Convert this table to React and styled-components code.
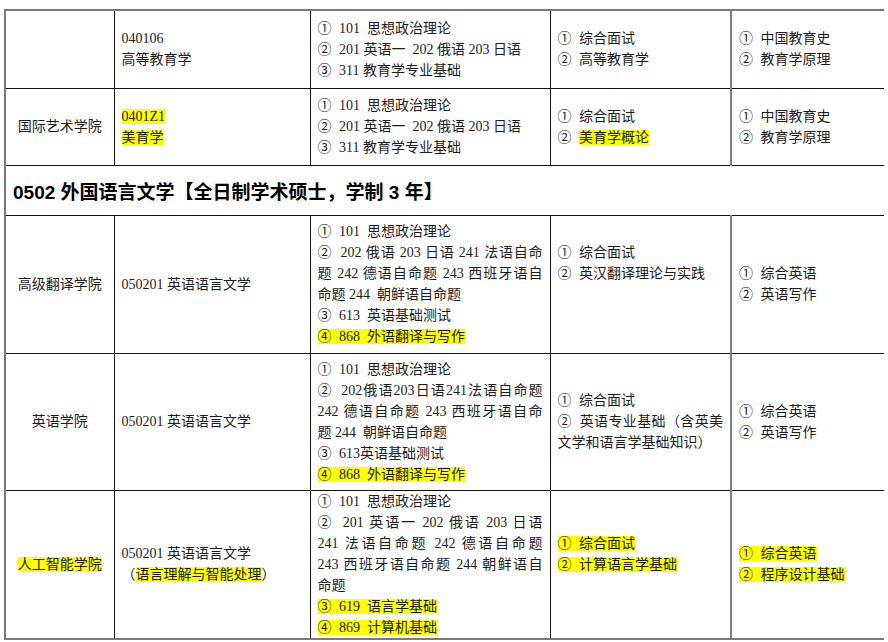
import styled, { createGlobalStyle } from 'styled-components';

const Global = createGlobalStyle`
  html, body {
    margin: 0;
    padding: 0;
    background: #fff;
  }
  body {
    font-family: "Liberation Serif", "Noto Sans CJK SC", serif;
    color: #1c1c1c;
  }
`;

const Page = styled.div`
  padding: 9px 0 0 4px;
  width: 884px;
  height: 642px;
  overflow: hidden;
  box-sizing: border-box;
`;

const Table = styled.table`
  width: 880px;
  table-layout: fixed;
  border-collapse: collapse;
  border: 2px solid #7a7a7a;
`;

const Row = styled.tr`
  height: ${(p) => p.$h}px;
`;

const Cell = styled.td`
  border: 1px solid #111;
  padding: 0 7px ${(p) => p.$lift || 0}px 7px;
  vertical-align: middle;
  font-size: 14px;
  line-height: 21px;
  text-align: ${(p) => (p.$center ? 'center' : 'left')};
  ${(p) => (p.$grey ? 'border-left: 2px solid #808080;' : '')}
`;

const HeaderCell = styled.td`
  border: 1px solid #111;
  padding: 0 7px;
  font-family: "Liberation Sans", "Noto Sans CJK SC", sans-serif;
  font-weight: bold;
  font-size: 19px;
  color: #000;
`;

const Line = styled.div`
  white-space: ${(p) => (p.$justify ? 'normal' : 'pre-wrap')};
  text-align: ${(p) => (p.$justify ? 'justify' : 'left')};
  text-align-last: ${(p) => (p.$justify ? 'justify' : 'auto')};
`;

const Mark = styled.span`
  margin-right: 4px;
`;

const Hl = styled.span`
  background: #ffff00;
`;

const cols = [109, 196, 240, 181, 154];

function Exam() {
  return (
    <>
      <Line><Mark>①</Mark> 101  思想政治理论</Line>
      <Line><Mark>②</Mark> 201 英语一  202 俄语 203 日语</Line>
      <Line><Mark>③</Mark> 311 教育学专业基础</Line>
    </>
  );
}

function EduRetest() {
  return (
    <>
      <Line><Mark>①</Mark> 中国教育史</Line>
      <Line><Mark>②</Mark> 教育学原理</Line>
    </>
  );
}

function EngRetest() {
  return (
    <>
      <Line><Mark>①</Mark> 综合英语</Line>
      <Line><Mark>②</Mark> 英语写作</Line>
    </>
  );
}

export default function App() {
  return (
    <Page>
      <Global />
      <Table>
        <colgroup>
          {cols.map((w, i) => (
            <col key={i} style={{ width: w }} />
          ))}
        </colgroup>
        <tbody>
          <Row $h={78}>
            <Cell $center></Cell>
            <Cell>
              <Line>040106</Line>
              <Line>高等教育学</Line>
            </Cell>
            <Cell>
              <Exam />
            </Cell>
            <Cell>
              <Line><Mark>①</Mark> 综合面试</Line>
              <Line><Mark>②</Mark> 高等教育学</Line>
            </Cell>
            <Cell $grey>
              <EduRetest />
            </Cell>
          </Row>
          <Row $h={77}>
            <Cell $center>国际艺术学院</Cell>
            <Cell>
              <Line><Hl>0401Z1</Hl></Line>
              <Line><Hl>美育学</Hl></Line>
            </Cell>
            <Cell>
              <Exam />
            </Cell>
            <Cell>
              <Line><Mark>①</Mark> 综合面试</Line>
              <Line><Mark>②</Mark> <Hl>美育学概论</Hl></Line>
            </Cell>
            <Cell $grey>
              <EduRetest />
            </Cell>
          </Row>
          <Row $h={50}>
            <HeaderCell colSpan={5}>0502 外国语言文学【全日制学术硕士，学制 3 年】</HeaderCell>
          </Row>
          <Row $h={138}>
            <Cell $center>高级翻译学院</Cell>
            <Cell>050201 英语语言文学</Cell>
            <Cell>
              <Line><Mark>①</Mark> 101  思想政治理论</Line>
              <Line $justify><Mark>②</Mark> 202 俄语 203 日语 241 法语自命</Line>
              <Line $justify>题 242 德语自命题 243 西班牙语自</Line>
              <Line>命题 244  朝鲜语自命题</Line>
              <Line><Mark>③</Mark> 613  英语基础测试</Line>
              <Line><Hl><Mark>④</Mark> 868  外语翻译与写作</Hl></Line>
            </Cell>
            <Cell $lift={42}>
              <Line><Mark>①</Mark> 综合面试</Line>
              <Line><Mark>②</Mark> 英汉翻译理论与实践</Line>
            </Cell>
            <Cell $grey>
              <EngRetest />
            </Cell>
          </Row>
          <Row $h={137}>
            <Cell $center>英语学院</Cell>
            <Cell>050201 英语语言文学</Cell>
            <Cell>
              <Line><Mark>①</Mark> 101  思想政治理论</Line>
              <Line $justify><Mark>②</Mark> 202俄语203日语241法语自命题</Line>
              <Line $justify>242 德语自命题 243 西班牙语自命</Line>
              <Line>题 244  朝鲜语自命题</Line>
              <Line><Mark>③</Mark> 613英语基础测试</Line>
              <Line><Hl><Mark>④</Mark> 868  外语翻译与写作</Hl></Line>
            </Cell>
            <Cell>
              <Line><Mark>①</Mark> 综合面试</Line>
              <Line $justify><Mark>②</Mark> 英语专业基础（含英美</Line>
              <Line>文学和语言学基础知识）</Line>
            </Cell>
            <Cell $grey>
              <EngRetest />
            </Cell>
          </Row>
          <Row $h={149}>
            <Cell $center>
              <Hl>人工智能学院</Hl>
            </Cell>
            <Cell>
              <Line>050201 英语语言文学</Line>
              <Line>（<Hl>语言理解与智能处理</Hl>）</Line>
            </Cell>
            <Cell>
              <Line><Mark>①</Mark> 101  思想政治理论</Line>
              <Line $justify><Mark>②</Mark> 201 英语一 202 俄语 203 日语</Line>
              <Line $justify>241 法语自命题 242 德语自命题</Line>
              <Line $justify>243 西班牙语自命题 244 朝鲜语自</Line>
              <Line>命题</Line>
              <Line><Hl><Mark>③</Mark> 619  语言学基础</Hl></Line>
              <Line><Hl><Mark>④</Mark> 869  计算机基础</Hl></Line>
            </Cell>
            <Cell $lift={21}>
              <Line><Hl><Mark>①</Mark> 综合面试</Hl></Line>
              <Line><Hl><Mark>②</Mark> 计算语言学基础</Hl></Line>
            </Cell>
            <Cell $grey>
              <Line><Hl><Mark>①</Mark> 综合英语</Hl></Line>
              <Line><Hl><Mark>②</Mark> 程序设计基础</Hl></Line>
            </Cell>
          </Row>
        </tbody>
      </Table>
    </Page>
  );
}
